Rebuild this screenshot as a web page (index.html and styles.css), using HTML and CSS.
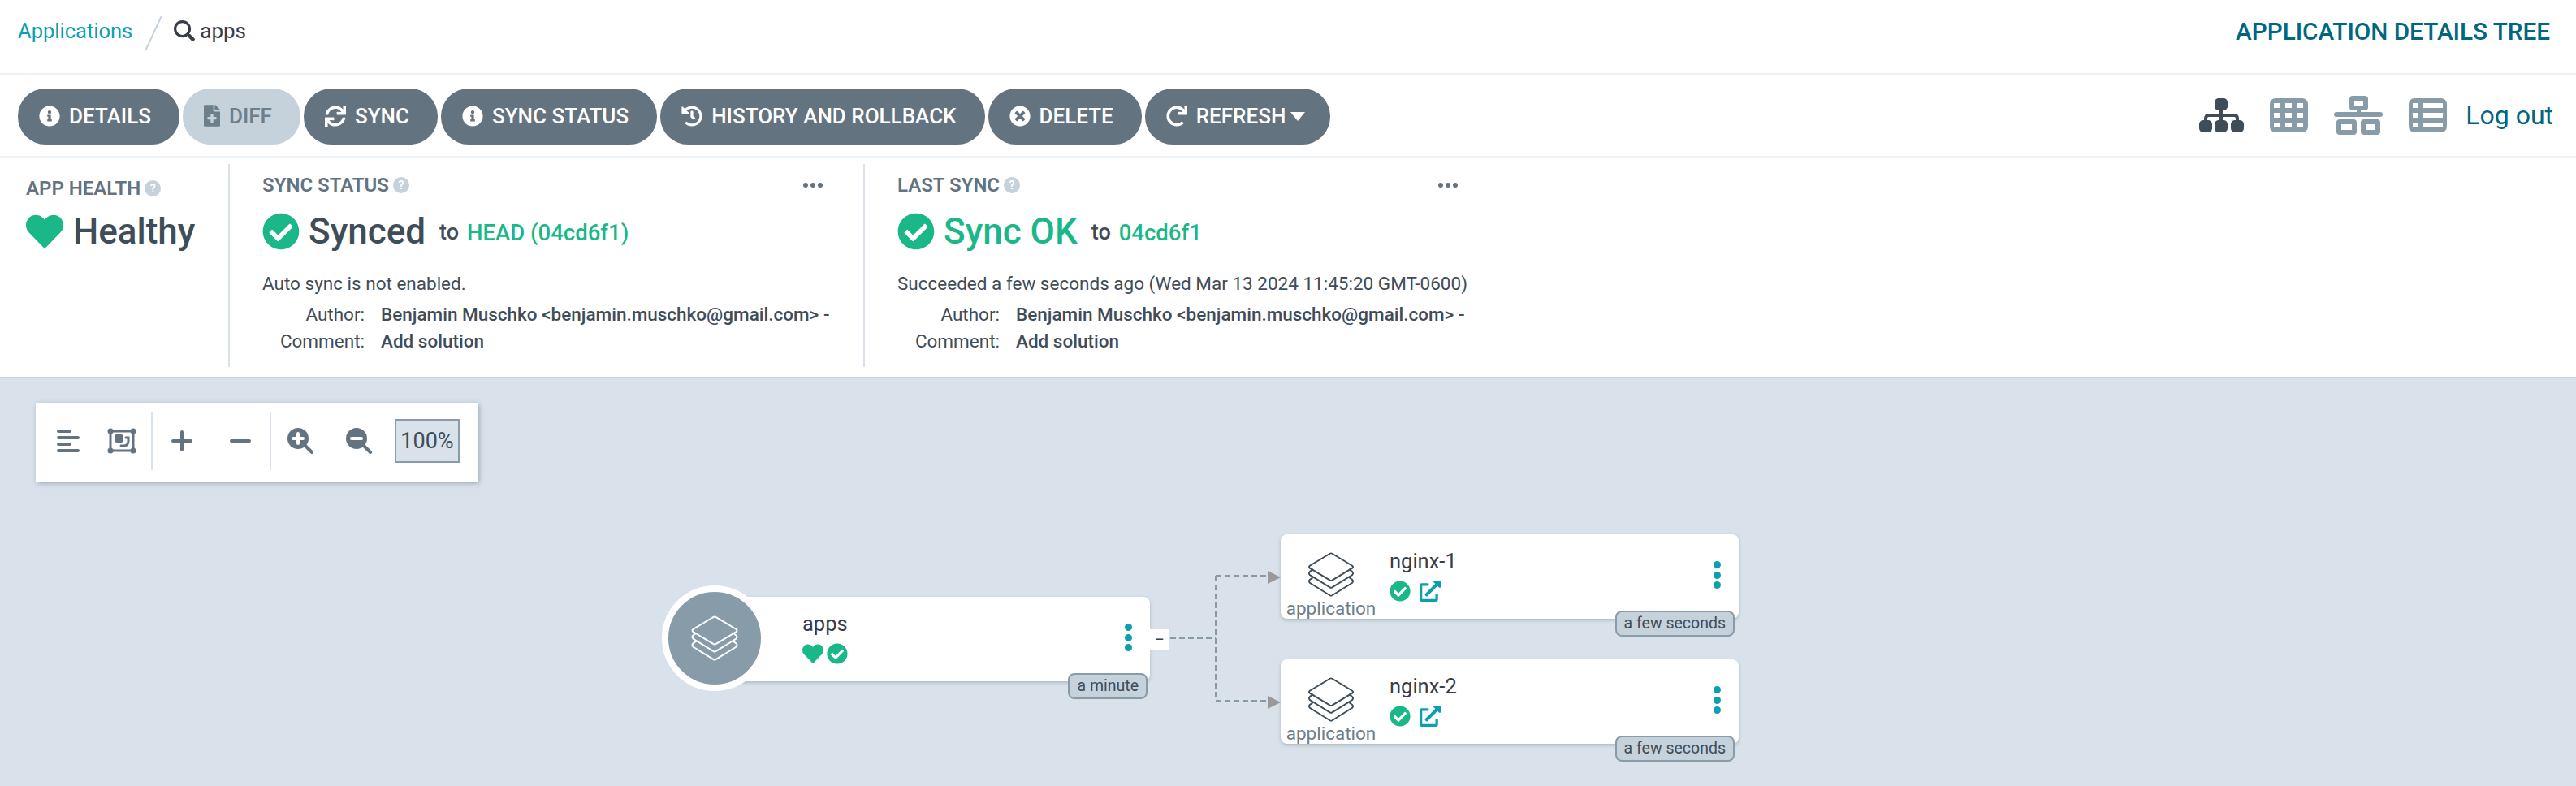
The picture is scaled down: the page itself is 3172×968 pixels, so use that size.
FILE: index.html
```html
<!DOCTYPE html>
<html lang="en">
<head>
  <meta charset="UTF-8">
  <title>apps - Application Details Tree</title>
  <link rel="stylesheet" href="styles.css">
</head>
<body>
  <svg class="defs" width="0" height="0">
    <defs>
      <symbol id="i-info" viewBox="0 0 512 512"><path d="M256 8C119.043 8 8 119.083 8 256c0 136.997 111.043 248 248 248s248-111.003 248-248C504 119.083 392.957 8 256 8zm0 110c23.196 0 42 18.804 42 42s-18.804 42-42 42-42-18.804-42-42 18.804-42 42-42zm56 254c0 6.627-5.373 12-12 12h-88c-6.627 0-12-5.373-12-12v-24c0-6.627 5.373-12 12-12h12v-64h-12c-6.627 0-12-5.373-12-12v-24c0-6.627 5.373-12 12-12h64c6.627 0 12 5.373 12 12v100h12c6.627 0 12 5.373 12 12v24z"/></symbol>
      <symbol id="i-check" viewBox="0 0 512 512"><path d="M504 256c0 136.967-111.033 248-248 248S8 392.967 8 256 119.033 8 256 8s248 111.033 248 248zM227.314 387.314l184-184c6.248-6.248 6.248-16.379 0-22.627l-22.627-22.627c-6.248-6.249-16.379-6.249-22.628 0L216 308.118l-70.059-70.059c-6.248-6.248-16.379-6.248-22.628 0l-22.627 22.627c-6.248 6.248-6.248 16.379 0 22.627l104 104c6.249 6.249 16.379 6.249 22.628.001z"/></symbol>
      <symbol id="i-heart" viewBox="0 0 512 512"><path d="M462.3 62.6C407.5 15.9 326 24.3 275.7 76.2L256 96.5l-19.7-20.3C186.1 24.3 104.5 15.9 49.7 62.6c-62.8 53.6-66.1 149.8-9.9 207.9l193.5 199.8c12.5 12.9 32.8 12.9 45.3 0l193.5-199.8c56.3-58.1 53-154.3-9.8-207.9z"/></symbol>
      <symbol id="i-link" viewBox="0 0 512 512"><path d="M432 320h-32a16 16 0 0 0-16 16v112H64V128h144a16 16 0 0 0 16-16V80a16 16 0 0 0-16-16H48a48 48 0 0 0-48 48v352a48 48 0 0 0 48 48h352a48 48 0 0 0 48-48V336a16 16 0 0 0-16-16zM488 0H360c-21.37 0-32.05 25.91-17 41l35.73 35.73L135 320.37a24 24 0 0 0 0 34L157.67 377a24 24 0 0 0 34 0l243.61-243.68L471 169c15 15 41 4.5 41-17V24a24 24 0 0 0-24-24z"/></symbol>
      <symbol id="i-stack" viewBox="0 0 58 56">
        <path d="M27.6 1.8Q29 1 30.4 1.8L55.6 17Q57.4 18.5 55.6 20L30.4 35.2Q29 36 27.6 35.2L2.4 20Q.6 18.5 2.4 17Z"/>
        <path d="M6.5 21.5 2.4 24.5Q.6 26.5 2.4 28.5L27.6 44.2Q29 45 30.4 44.2L55.6 28.5Q57.4 26.5 55.6 24.5L51.5 21.5"/>
        <path d="M6.5 31.5 2.4 34.5Q.6 36.5 2.4 38.5L27.6 54.2Q29 55 30.4 54.2L55.6 38.5Q57.4 36.5 55.6 34.5L51.5 31.5"/>
      </symbol>
    </defs>
  </svg>

  <header class="top-bar">
    <div class="breadcrumbs">
      <a class="crumb-link" href="#">Applications</a>
      <span class="crumb-slash"></span>
      <svg class="crumb-search" viewBox="0 0 512 512"><path d="M505 442.7 405.3 343c-4.5-4.5-10.6-7-17-7H372c27.6-35.3 44-79.7 44-128C416 93.1 322.9 0 208 0S0 93.1 0 208s93.1 208 208 208c48.3 0 92.7-16.4 128-44v16.3c0 6.4 2.5 12.5 7 17l99.7 99.7c9.4 9.4 24.6 9.4 33.9 0l28.3-28.3c9.4-9.4 9.4-24.6.1-34zM208 352c-79.6 0-144-64.3-144-144 0-79.6 64.3-144 144-144 79.6 0 144 64.3 144 144 0 79.6-64.3 144-144 144z"/></svg>
      <span class="crumb-current">apps</span>
    </div>
    <div class="page-title">APPLICATION DETAILS TREE</div>
  </header>

  <nav class="tool-bar">
    <div class="actions">
      <button class="action"><svg class="action-icon"><use href="#i-info"/></svg>DETAILS</button>
      <button class="action disabled">
        <svg class="action-icon file" viewBox="0 0 384 512"><path d="M224 136V0H24C10.7 0 0 10.7 0 24v464c0 13.3 10.7 24 24 24h336c13.3 0 24-10.7 24-24V160H248c-13.2 0-24-10.8-24-24zm60 212h-60v60c0 8.8-7.2 16-16 16h-32c-8.8 0-16-7.2-16-16v-60h-60c-8.8 0-16-7.2-16-16v-32c0-8.8 7.2-16 16-16h60v-60c0-8.8 7.2-16 16-16h32c8.8 0 16 7.2 16 16v60h60c8.8 0 16 7.2 16 16v32c0 8.8-7.2 16-16 16zM377 105 279 7c-4.5-4.5-10.6-7-17-7h-6v128h128v-6.1c0-6.3-2.5-12.4-7-16.9z"/></svg>DIFF</button>
      <button class="action"><svg class="action-icon" viewBox="0 0 512 512"><path d="M440.65 12.57l4 82.77A247.16 247.16 0 0 0 255.83 8C134.73 8 33.91 94.92 12.29 209.82A12 12 0 0 0 24.09 224h49.05a12 12 0 0 0 11.67-9.26 175.91 175.91 0 0 1 317-56.94l-101.46-4.86a12 12 0 0 0-12.57 12v47.41a12 12 0 0 0 12 12H500a12 12 0 0 0 12-12V12a12 12 0 0 0-12-12h-47.37a12 12 0 0 0-11.98 12.57zM255.83 432a175.61 175.61 0 0 1-146-77.8l101.8 4.87a12 12 0 0 0 12.57-12v-47.4a12 12 0 0 0-12-12H12a12 12 0 0 0-12 12V500a12 12 0 0 0 12 12h47.35a12 12 0 0 0 12-12.6l-4.15-82.57A247.17 247.17 0 0 0 255.83 504c121.11 0 221.93-86.92 243.55-201.82a12 12 0 0 0-11.8-14.18h-49.05a12 12 0 0 0-11.67 9.26A175.86 175.86 0 0 1 255.83 432z"/></svg>SYNC</button>
      <button class="action"><svg class="action-icon"><use href="#i-info"/></svg>SYNC STATUS</button>
      <button class="action"><svg class="action-icon" viewBox="0 0 512 512"><path d="M504 255.531c.253 136.64-111.18 248.372-247.82 248.468-59.015.042-113.223-20.53-155.822-54.911-11.077-8.94-11.905-25.541-1.839-35.607l11.267-11.267c8.609-8.609 22.353-9.551 31.891-1.984C173.062 425.135 212.781 440 256 440c101.705 0 184-82.311 184-184 0-101.705-82.311-184-184-184-48.814 0-93.149 18.969-126.068 49.932l50.754 50.754c10.08 10.08 2.941 27.314-11.313 27.314H24c-8.837 0-16-7.163-16-16V38.627c0-14.254 17.234-21.393 27.314-11.314l49.372 49.372C129.209 34.136 189.552 8 256 8c136.81 0 247.747 110.78 248 247.531zm-180.912 78.784l9.823-12.63c8.138-10.463 6.253-25.542-4.21-33.679L288 256.349V152c0-13.255-10.745-24-24-24h-16c-13.255 0-24 10.745-24 24v135.651l65.409 50.874c10.463 8.137 25.541 6.253 33.679-4.21z"/></svg>HISTORY AND ROLLBACK</button>
      <button class="action"><svg class="action-icon" viewBox="0 0 512 512"><path d="M256 8C119 8 8 119 8 256s111 248 248 248 248-111 248-248S393 8 256 8zm121.6 313.1c4.7 4.7 4.7 12.3 0 17L338 377.6c-4.7 4.7-12.3 4.7-17 0L256 312l-65.1 65.6c-4.7 4.7-12.3 4.7-17 0L134.4 338c-4.7-4.7-4.7-12.3 0-17l65.6-65-65.6-65.1c-4.7-4.7-4.7-12.3 0-17l39.6-39.6c4.7-4.7 12.3-4.7 17 0l65 65.7 65.1-65.6c4.7-4.7 12.3-4.7 17 0l39.6 39.6c4.7 4.7 4.7 12.3 0 17L312 256l65.6 65.1z"/></svg>DELETE</button>
      <button class="action refresh"><svg class="action-icon" viewBox="0 0 512 512"><path d="M500.33 0h-47.41a12 12 0 0 0-12 12.57l4 82.76A247.42 247.42 0 0 0 256 8C119.34 8 7.9 119.53 8 256.19 8.1 393.07 119.1 504 256 504a247.1 247.1 0 0 0 166.18-63.91 12 12 0 0 0 .48-17.43l-34-34a12 12 0 0 0-16.38-.55A176 176 0 1 1 402.1 157.8l-101.53-4.87a12 12 0 0 0-12.57 12v47.41a12 12 0 0 0 12 12h200.33a12 12 0 0 0 12-12V12a12 12 0 0 0-12-12z"/></svg>REFRESH<span class="caret"></span></button>
    </div>
    <div class="views">
      <svg class="view-icon active" viewBox="0 0 55 42">
        <rect x="19" y="0" width="16" height="15" rx="5"/>
        <rect x="0" y="27" width="16" height="15" rx="5"/>
        <rect x="19" y="27" width="16" height="15" rx="5"/>
        <rect x="39" y="27" width="16" height="15" rx="5"/>
        <path class="wire" d="M8 30v-5q0-4 4-4h31q4 0 4 4v5M27 14v16"/>
      </svg>
      <svg class="view-icon" viewBox="0 0 47 42">
        <path fill-rule="evenodd" d="M7 0h33a7 7 0 0 1 7 7v28a7 7 0 0 1-7 7H7a7 7 0 0 1-7-7V7a7 7 0 0 1 7-7zM5 6v6h8V6zm14 0v6h8V6zm14 0v6h8V6zM5 18v6h8v-6zm14 0v6h8v-6zm14 0v6h8v-6zM5 30v6h8v-6zm14 0v6h8v-6zm14 0v6h8v-6z"/>
      </svg>
      <svg class="view-icon network" viewBox="0 0 60 48">
        <path fill-rule="evenodd" d="M23 0h15a4 4 0 0 1 4 4v10a4 4 0 0 1-4 4h-5v2h24a3 3 0 0 1 0 6H3a3 3 0 0 1 0-6h25v-2h-5a4 4 0 0 1-4-4V4a4 4 0 0 1 4-4zm2 6v6h11V6z"/>
        <path fill-rule="evenodd" d="M7 29h17a4 4 0 0 1 4 4v11a4 4 0 0 1-4 4H7a4 4 0 0 1-4-4V33a4 4 0 0 1 4-4zm2 6v7h13v-7zM37 29h16a4 4 0 0 1 4 4v11a4 4 0 0 1-4 4H37a4 4 0 0 1-4-4V33a4 4 0 0 1 4-4zm2 6v7h12v-7z"/>
      </svg>
      <svg class="view-icon" viewBox="0 0 47 42">
        <path fill-rule="evenodd" d="M7 0h33a7 7 0 0 1 7 7v28a7 7 0 0 1-7 7H7a7 7 0 0 1-7-7V7a7 7 0 0 1 7-7zM5 6v6h6V6zm12 0v6h25V6zM5 18v6h6v-6zm12 0v6h25v-6zM5 30v6h6v-6zm12 0v6h25v-6z"/>
      </svg>
      <a class="logout" href="#">Log out</a>
    </div>
  </nav>

  <section class="status-panel">
    <div class="status-col health-col">
      <div class="status-head">APP HEALTH <span class="help">?</span></div>
      <div class="status-main">
        <svg class="heart-big"><use href="#i-heart"/></svg>
        <span class="status-word">Healthy</span>
      </div>
    </div>
    <div class="status-col sync-col">
      <div class="status-head">SYNC STATUS <span class="help">?</span><span class="more"><i></i><i></i><i></i></span></div>
      <div class="status-main">
        <svg class="check-big"><use href="#i-check"/></svg>
        <span class="status-word">Synced</span>
        <span class="to">to</span>
        <a class="rev" href="#">HEAD (04cd6f1)</a>
      </div>
      <p class="note">Auto sync is not enabled.</p>
      <dl class="meta">
        <dt>Author:</dt><dd>Benjamin Muschko &lt;benjamin.muschko@gmail.com&gt; -</dd>
        <dt>Comment:</dt><dd>Add solution</dd>
      </dl>
    </div>
    <div class="status-col last-col">
      <div class="status-head">LAST SYNC <span class="help">?</span><span class="more"><i></i><i></i><i></i></span></div>
      <div class="status-main">
        <svg class="check-big"><use href="#i-check"/></svg>
        <span class="status-word ok">Sync OK</span>
        <span class="to">to</span>
        <a class="rev" href="#">04cd6f1</a>
      </div>
      <p class="note">Succeeded a few seconds ago (Wed Mar 13 2024 11:45:20 GMT-0600)</p>
      <dl class="meta">
        <dt>Author:</dt><dd>Benjamin Muschko &lt;benjamin.muschko@gmail.com&gt; -</dd>
        <dt>Comment:</dt><dd>Add solution</dd>
      </dl>
    </div>
  </section>

  <main class="canvas">
    <div class="graph-tools">
      <span class="tool narrow">
        <svg class="tool-icon" viewBox="0 0 36 32"><path d="M6 4h14M6 12h24M6 20h14M6 28h24"/></svg>
      </span>
      <span class="tool narrow">
        <svg class="tool-icon" viewBox="0 0 36 32"><path class="thin" d="M4 4h28v24H4z"/><circle class="solid" cx="4" cy="4" r="3.5"/><circle class="solid" cx="32" cy="4" r="3.5"/><circle class="solid" cx="4" cy="28" r="3.5"/><circle class="solid" cx="32" cy="28" r="3.5"/><rect class="solid" x="9" y="8" width="11" height="10" rx="3"/><path class="thin" d="M23 12h3v4q0 6-6 6h-3"/></svg>
      </span>
      <span class="tool-sep first-sep"></span>
      <span class="tool">
        <svg class="tool-icon" viewBox="0 0 36 32"><path d="M18 5v22M7 16h22"/></svg>
      </span>
      <span class="tool">
        <svg class="tool-icon" viewBox="0 0 36 32"><path d="M7 16h22"/></svg>
      </span>
      <span class="tool-sep"></span>
      <span class="tool">
        <svg class="tool-icon" viewBox="0 0 36 32"><circle class="solid" cx="15" cy="13" r="13"/><path class="lens" d="M15 7v12M9 13h12"/><path d="M24 22l8 8"/></svg>
      </span>
      <span class="tool">
        <svg class="tool-icon" viewBox="0 0 36 32"><circle class="solid" cx="15" cy="13" r="13"/><path class="lens" d="M9 13h12"/><path d="M24 22l8 8"/></svg>
      </span>
      <span class="zoom-box">100%</span>
    </div>

    <svg class="edges" width="3172" height="502">
      <path d="M1441 320H1497M1497 243V397M1497 243H1562M1497 397H1562"/>
      <polygon points="1561,237 1577,245 1561,253"/>
      <polygon points="1561,391 1577,399 1561,407"/>
    </svg>

    <div class="node app-root">
      <div class="node-circle"><svg class="stack white"><use href="#i-stack"/></svg></div>
      <div class="node-body">
        <div class="node-name">apps</div>
        <div class="node-status">
          <svg class="mini-heart"><use href="#i-heart"/></svg>
          <svg class="mini-check"><use href="#i-check"/></svg>
        </div>
      </div>
      <span class="dots"><i></i><i></i><i></i></span>
      <span class="collapse">&minus;</span>
      <span class="age">a minute</span>
    </div>

    <div class="node app-child first">
      <div class="node-kind">
        <svg class="stack"><use href="#i-stack"/></svg>
        <span class="kind-label">application</span>
      </div>
      <div class="node-body">
        <div class="node-name">nginx-1</div>
        <div class="node-status">
          <svg class="mini-check"><use href="#i-check"/></svg>
          <svg class="mini-link"><use href="#i-link"/></svg>
        </div>
      </div>
      <span class="dots"><i></i><i></i><i></i></span>
      <span class="age">a few seconds</span>
    </div>

    <div class="node app-child second">
      <div class="node-kind">
        <svg class="stack"><use href="#i-stack"/></svg>
        <span class="kind-label">application</span>
      </div>
      <div class="node-body">
        <div class="node-name">nginx-2</div>
        <div class="node-status">
          <svg class="mini-check"><use href="#i-check"/></svg>
          <svg class="mini-link"><use href="#i-link"/></svg>
        </div>
      </div>
      <span class="dots"><i></i><i></i><i></i></span>
      <span class="age">a few seconds</span>
    </div>
  </main>
</body>
</html>
```

FILE: styles.css
```css
/* page */
html, body {
  margin: 0;
  height: 100%;
  overflow: hidden;
}
body {
  display: flex;
  flex-direction: column;
  font-family: Roboto, "Liberation Sans", sans-serif;
  color: #3f4d59;
  background: #fff;
}
.defs {
  position: absolute;
}
a {
  text-decoration: none;
}

/* top bar */
.top-bar {
  height: 90px;
  flex: none;
  display: flex;
  align-items: center;
  justify-content: space-between;
  padding: 0 32px 0 22px;
  border-bottom: 2px solid #eef2f6;
}
.breadcrumbs,
.page-title {
  margin-bottom: 14px;
}
.breadcrumbs {
  display: flex;
  align-items: center;
}
.crumb-link {
  font-size: 25.5px;
  color: #0aa0b2;
}
.crumb-slash {
  width: 2px;
  height: 46px;
  margin: 6px 24px 0 25px;
  background: #c5d1db;
  transform: rotate(25deg);
}
.crumb-search {
  width: 26px;
  height: 26px;
  fill: #363c4a;
  margin-right: 6px;
}
.crumb-current {
  font-size: 26px;
  color: #363c4a;
}
.page-title {
  font-size: 29.7px;
  font-weight: 500;
  color: #00677f;
}

/* toolbar */
.tool-bar {
  height: 97px;
  flex: none;
  display: flex;
  align-items: center;
  justify-content: space-between;
  padding: 3px 28px 0 22px;
  border-bottom: 2px solid #eef2f6;
}
.actions {
  display: flex;
  gap: 4px;
}
.action {
  height: 69px;
  display: flex;
  align-items: center;
  padding: 0 35px 2px 26px;
  border: 0;
  border-radius: 34px;
  background: #63737f;
  color: #fff;
  font-family: inherit;
  font-size: 26px;
  font-weight: 500;
}
.action.disabled {
  background: #c5d1db;
  color: #6d7f8b;
}
.action.refresh {
  padding-right: 31px;
}
.action-icon {
  width: 26px;
  height: 26px;
  margin-right: 11px;
  fill: currentColor;
}
.action-icon.file {
  width: 20px;
  height: 27px;
}
.caret {
  width: 0;
  height: 0;
  margin-left: 6px;
  margin-top: 2px;
  border: 9px solid transparent;
  border-top: 11px solid #fff;
  border-bottom: 0;
}
.views {
  display: flex;
  align-items: center;
  gap: 32px;
  margin-bottom: 3px;
}
.view-icon {
  width: 47px;
  height: 42px;
  fill: #889ba9;
}
.view-icon.active {
  width: 55px;
  fill: #3f4d59;
}
.view-icon .wire {
  fill: none;
  stroke: #3f4d59;
  stroke-width: 4;
}
.view-icon.network {
  width: 60px;
  height: 48px;
}
.logout {
  margin-left: -9px;
  font-size: 32px;
  color: #00677f;
}

/* status panel */
.status-panel {
  height: 272px;
  flex: none;
  box-sizing: border-box;
  display: flex;
  padding-top: 8px;
  border-bottom: 2px solid #c5d1db;
}
.status-col {
  box-sizing: border-box;
  flex: none;
  height: 250px;
  padding: 12px 50px 0 40px;
  white-space: nowrap;
}
.health-col {
  width: 283px;
  padding: 16px 0 0 32px;
  border-right: 2px solid #d9e2ea;
}
.sync-col {
  width: 782px;
  border-right: 2px solid #d9e2ea;
}
.last-col {
  width: 780px;
}
.status-head {
  display: flex;
  align-items: center;
  gap: 5px;
  font-size: 24px;
  line-height: 28px;
  font-weight: 600;
  color: #63737f;
}
.help {
  width: 20px;
  height: 20px;
  border-radius: 50%;
  background: #c5d1db;
  color: #fff;
  font-size: 14px;
  line-height: 20px;
  font-weight: 700;
  text-align: center;
}
.more {
  display: flex;
  gap: 3px;
  margin-left: auto;
}
.more i {
  width: 6px;
  height: 6px;
  border-radius: 50%;
  background: #63737f;
}
.status-main {
  display: flex;
  align-items: center;
  height: 50px;
  margin-top: 18px;
}
.health-col .status-main {
  margin-top: 14px;
}
.heart-big {
  width: 46px;
  height: 46px;
  margin-right: 12px;
  fill: #1ab788;
}
.check-big {
  width: 46px;
  height: 46px;
  margin-right: 11px;
  fill: #1ab788;
}
.status-word {
  font-size: 44px;
  font-weight: 500;
  color: #3f4d59;
}
.status-word.ok {
  color: #1ab788;
}
.to {
  margin: 2px 10px 0 17px;
  font-size: 27px;
  font-weight: 500;
  color: #3f4d59;
}
.rev {
  margin-top: 2px;
  font-size: 27.5px;
  font-weight: 500;
  color: #1ab788;
}
.note {
  margin: 24px 0 0;
  font-size: 22.5px;
  line-height: 30px;
}
.meta {
  display: grid;
  grid-template-columns: 126px auto;
  column-gap: 20px;
  row-gap: 3px;
  justify-content: start;
  margin: 8px 0 0;
  font-size: 22.5px;
  line-height: 30px;
}
.meta dt {
  text-align: right;
}
.meta dd {
  margin: 0;
  font-weight: 500;
}

/* graph canvas */
.canvas {
  flex: 1;
  position: relative;
  background: #d9e2ea;
  overflow: hidden;
}
.graph-tools {
  position: absolute;
  left: 44px;
  top: 30px;
  box-sizing: border-box;
  width: 544px;
  height: 97px;
  display: flex;
  align-items: center;
  padding: 0 0 3px 7px;
  background: #fff;
  box-shadow: 2px 2px 6px rgba(70, 90, 105, .45);
}
.tool {
  display: flex;
  justify-content: center;
  width: 72px;
}
.tool.narrow {
  width: 66px;
}
.tool-icon {
  width: 36px;
  height: 32px;
  fill: none;
  stroke: #63737f;
  stroke-width: 4;
  stroke-linecap: round;
}
.tool-icon .solid {
  fill: #63737f;
  stroke: none;
}
.tool-icon .lens {
  stroke: #fff;
}
.tool-icon .thin {
  stroke-width: 3;
}
.tool-sep {
  width: 2px;
  height: 71px;
  background: #d9e2ea;
}
.first-sep {
  margin-left: 3px;
}
.zoom-box {
  box-sizing: border-box;
  width: 80px;
  height: 54px;
  margin-left: 8px;
  border: 2px solid #889ba9;
  background: #d9e2ea;
  font-size: 27px;
  line-height: 50px;
  text-align: center;
}
.edges {
  position: absolute;
  left: 0;
  top: 0;
}
.edges path {
  fill: none;
  stroke: #889ba9;
  stroke-width: 2;
  stroke-dasharray: 7 4;
}
.edges polygon {
  fill: #999;
}

/* nodes */
.node {
  position: absolute;
  height: 104px;
  display: flex;
  background: #fff;
  border-radius: 8px;
  box-shadow: 0 2px 4px rgba(70, 90, 105, .3);
}
.app-root {
  left: 860px;
  top: 269px;
  width: 556px;
}
.app-child {
  left: 1577px;
  width: 564px;
}
.app-child.first {
  top: 192px;
}
.app-child.second {
  top: 346px;
}
.node-circle {
  position: absolute;
  left: -45px;
  top: -14px;
  box-sizing: border-box;
  width: 130px;
  height: 130px;
  display: flex;
  align-items: center;
  justify-content: center;
  border: 8px solid #fff;
  border-radius: 50%;
  background: #889ba9;
}
.stack {
  width: 58px;
  height: 56px;
  fill: none;
  stroke: #3f4d59;
  stroke-width: 2;
}
.stack.white {
  stroke: #fff;
}
.node-kind {
  width: 124px;
  display: flex;
  flex-direction: column;
  align-items: center;
  padding-top: 22px;
}
.kind-label {
  margin-top: 1px;
  font-size: 22.5px;
  line-height: 26px;
  color: #6d7f8b;
}
.node-body {
  padding: 18px 0 0 10px;
}
.app-root .node-body {
  padding-left: 128px;
}
.node-name {
  font-size: 25.5px;
  line-height: 30px;
  color: #363c4a;
}
.node-status {
  display: flex;
  align-items: center;
  gap: 4px;
  margin-top: 9px;
}
.app-child .node-status {
  gap: 11px;
}
.mini-heart {
  width: 26px;
  height: 26px;
  fill: #1ab788;
}
.mini-check {
  width: 26px;
  height: 26px;
  fill: #1ab788;
}
.mini-link {
  width: 26px;
  height: 26px;
  fill: #0aa0b2;
}
.dots {
  position: absolute;
  right: 22px;
  top: 33px;
  display: flex;
  flex-direction: column;
  gap: 3.5px;
}
.dots i {
  width: 9px;
  height: 9px;
  border-radius: 50%;
  background: #0aa0b2;
}
.collapse {
  position: absolute;
  left: 100%;
  top: 40px;
  width: 23px;
  height: 26px;
  background: #fff;
  color: #363c4a;
  font-size: 22px;
  line-height: 25px;
  text-align: center;
}
.age {
  position: absolute;
  right: 5px;
  bottom: -22px;
  box-sizing: border-box;
  height: 32px;
  padding: 0 9px;
  border: 2px solid #889ba9;
  border-radius: 8px;
  background: #c5d1db;
  color: #3f4d59;
  font-size: 19.5px;
  line-height: 28px;
}
.app-root .age {
  right: 3px;
}
```
